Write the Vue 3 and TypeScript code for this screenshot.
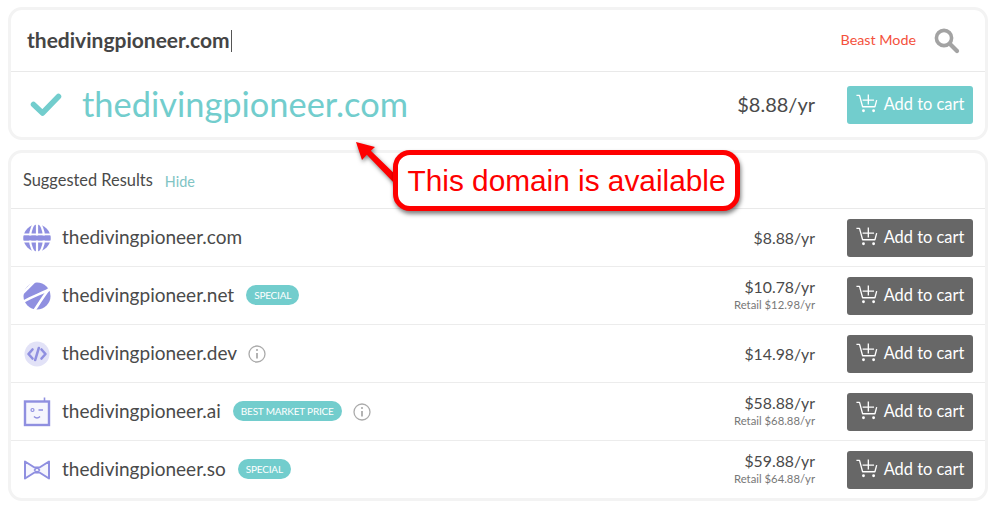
<script setup lang="ts">
interface Row {
  name: string
  price: string
  retail?: string
  badge?: string
  info?: boolean
  icon: 'com' | 'net' | 'dev' | 'ai' | 'so'
}

const rows: Row[] = [
  { name: 'thedivingpioneer.com', price: '$8.88/yr', icon: 'com' },
  { name: 'thedivingpioneer.net', price: '$10.78/yr', retail: 'Retail $12.98/yr', badge: 'SPECIAL', icon: 'net' },
  { name: 'thedivingpioneer.dev', price: '$14.98/yr', info: true, icon: 'dev' },
  { name: 'thedivingpioneer.ai', price: '$58.88/yr', retail: 'Retail $68.88/yr', badge: 'BEST MARKET PRICE', info: true, icon: 'ai' },
  { name: 'thedivingpioneer.so', price: '$59.88/yr', retail: 'Retail $64.88/yr', badge: 'SPECIAL', icon: 'so' },
]
</script>

<template>
  <div class="page">
    <section class="card">
      <div class="search">
        <span class="query">thedivingpioneer.com</span><span class="caret"></span>
        <a class="beast">Beast Mode</a>
        <svg class="glass" width="26" height="26" viewBox="0 0 26 26" fill="none" stroke="#a3a3a3">
          <circle cx="10" cy="10" r="7.6" stroke-width="3.6" />
          <path d="M16 16 L23 23" stroke-width="4.2" stroke-linecap="round" />
        </svg>
      </div>
      <div class="hit">
        <svg class="check" width="32" height="24" viewBox="0 0 32 24" fill="none" stroke="#72cdcd" stroke-width="5.5" stroke-linecap="round" stroke-linejoin="round">
          <path d="M3.5 11.5 L12.5 20 L28.5 3.5" />
        </svg>
        <span class="hit-name">thedivingpioneer.com</span>
        <span class="hit-price">$8.88/yr</span>
        <button class="cart teal">
          <svg width="22" height="19.4" viewBox="0 0 25 22" fill="none" stroke="#fff" stroke-width="1.5">
            <path d="M0.5 1.5 H4 L7.5 14.5 H21.5 L23.5 7" stroke-linejoin="round" />
            <path d="M7.5 7 H20.5 M14 0.5 V12" />
            <circle cx="8.5" cy="19" r="1.6" fill="#fff" stroke="none" />
            <circle cx="20" cy="19" r="1.6" fill="#fff" stroke="none" />
          </svg>
          Add to cart
        </button>
      </div>
    </section>

    <section class="card second">
      <div class="head">
        <span class="head-title">Suggested Results</span>
        <a class="hide">Hide</a>
      </div>
      <div v-for="row in rows" :key="row.name" class="row">
        <span class="tld">
          <svg v-if="row.icon === 'com'" width="28" height="28" viewBox="0 0 28 28">
            <circle cx="14" cy="14" r="13.5" fill="#8f8fe0" />
            <g fill="none" stroke="#fff" stroke-width="2.2">
              <ellipse cx="14" cy="14" rx="7" ry="15" />
              <path d="M14 0 V28 M0 10.5 H28 M0 17.5 H28" />
            </g>
            <rect x="0.5" y="11.6" width="27" height="4.8" fill="#8f8fe0" />
          </svg>
          <svg v-else-if="row.icon === 'net'" width="28" height="28" viewBox="0 0 28 28">
            <circle cx="14" cy="14" r="13.5" fill="#8f8fe0" />
            <g fill="none" stroke="#fff" stroke-width="2.6">
              <path d="M-1 12 L12 -1" />
              <path d="M0 20 C8 15 20 11 29 6" />
              <path d="M11 29 C15 23 20 15 26 7" />
            </g>
          </svg>
          <svg v-else-if="row.icon === 'dev'" width="28" height="28" viewBox="0 0 28 28">
            <circle cx="14" cy="14" r="12.5" fill="#e2e2f7" />
            <g fill="none" stroke="#8f8fe0" stroke-width="2.6" stroke-linecap="round" stroke-linejoin="round">
              <path d="M9.5 9.5 L5.5 14 L9.5 18.5 M18.5 9.5 L22.5 14 L18.5 18.5 M15.8 8 L12.2 20" />
            </g>
          </svg>
          <svg v-else-if="row.icon === 'ai'" width="28" height="30" viewBox="0 0 28 30">
            <rect x="2" y="4.5" width="24" height="23.5" fill="#f6f6fd" stroke="#8f8fe0" stroke-width="2.4" />
            <path d="M21.5 0.5 V4" stroke="#8f8fe0" stroke-width="1.6" />
            <circle cx="9.5" cy="13" r="1.5" fill="none" stroke="#8f8fe0" stroke-width="1.2" />
            <path d="M15.5 13 H20 M11 19.5 C13 21.5 15 21.5 17 19.5" fill="none" stroke="#8f8fe0" stroke-width="1.5" />
          </svg>
          <svg v-else width="28" height="20" viewBox="0 0 28 20" fill="none" stroke="#8f8fe0" stroke-width="2" stroke-linejoin="round">
            <path d="M2 1.5 L11.5 7.5 H16.5 L26 1.5 V18.5 L16.5 12.5 H11.5 L2 18.5 Z" fill="#f6f6fd" />
            <path d="M14 7.5 L16.5 10 L14 12.5 L11.5 10 Z" fill="#fff" stroke-width="1.6" />
          </svg>
        </span>
        <span class="name">{{ row.name }}</span>
        <span v-if="row.badge" class="badge">{{ row.badge }}</span>
        <svg v-if="row.info" class="info" width="18" height="18" viewBox="0 0 18 18" fill="none" stroke="#ababab" stroke-width="1.3">
          <circle cx="9" cy="9" r="8" />
          <path d="M9 8 V13.5" stroke-width="1.8" />
          <circle cx="9" cy="5" r="1.1" fill="#ababab" stroke="none" />
        </svg>
        <span class="prices" :class="{ stacked: row.retail }">
          <span class="price">{{ row.price }}</span>
          <span v-if="row.retail" class="retail">{{ row.retail }}</span>
        </span>
        <button class="cart">
          <svg width="22" height="19.4" viewBox="0 0 25 22" fill="none" stroke="#fff" stroke-width="1.5">
            <path d="M0.5 1.5 H4 L7.5 14.5 H21.5 L23.5 7" stroke-linejoin="round" />
            <path d="M7.5 7 H20.5 M14 0.5 V12" />
            <circle cx="8.5" cy="19" r="1.6" fill="#fff" stroke="none" />
            <circle cx="20" cy="19" r="1.6" fill="#fff" stroke="none" />
          </svg>
          Add to cart
        </button>
      </div>
    </section>

    <svg class="arrow" width="50" height="50" viewBox="0 0 50 50">
      <path d="M1 3 L20 8 L15.8 11.8 L46 41 L41 46 L11.8 15.8 L7 21 Z" fill="#fe0000" />
    </svg>
    <div class="callout">This domain is available</div>
  </div>
</template>

<style>
html,
body {
  background: #fff;
}
</style>

<style scoped>
.page {
  position: relative;
  width: 1000px;
  height: 510px;
  box-sizing: border-box;
  padding: 7px 12px 0 8px;
  font-family: Lato, "Open Sans", sans-serif;
  color: #4a4a4a;
  overflow: hidden;
}

.card {
  border: 3px solid #f3f3f3;
  border-radius: 14px;
  background: #fff;
}

.second {
  margin-top: 10px;
}

.search {
  height: 62px;
  display: flex;
  align-items: center;
  padding: 0 25px 0 16px;
  border-bottom: 1px solid #e9e9e9;
  box-sizing: border-box;
}

.query {
  margin-bottom: 2px;
  font-size: 21px;
  font-weight: 700;
  color: #454545;
}

.caret {
  width: 1px;
  height: 22px;
  margin-left: 1px;
  background: #555;
}

.beast {
  margin-left: auto;
  margin-bottom: 2px;
  font-size: 14.3px;
  color: #f4513c;
}

.glass {
  margin-left: 18px;
}

.hit {
  height: 65px;
  display: flex;
  align-items: center;
  padding: 0 12px 0 19px;
}

.check {
  flex: none;
}

.hit-name {
  margin-left: 20px;
  margin-bottom: 3px;
  font-size: 34.4px;
  color: #72cdcd;
}

.hit-price {
  margin-left: auto;
  margin-right: 32px;
  margin-bottom: 2px;
  font-size: 20px;
}

.cart {
  width: 126px;
  height: 38px;
  display: flex;
  align-items: center;
  justify-content: center;
  gap: 6px;
  border: 0;
  border-radius: 3px;
  padding: 0 0 2px;
  background: #676767;
  color: #fff;
  font-family: inherit;
  font-size: 16.4px;
}

.teal {
  background: #72cdcd;
}

.head {
  height: 56px;
  display: flex;
  align-items: center;
  padding-left: 12px;
  border-bottom: 1px solid #e9e9e9;
  box-sizing: border-box;
}

.head-title {
  margin-bottom: 2px;
  font-size: 16.4px;
}

.hide {
  margin-left: 12px;
  margin-top: 2px;
  font-size: 14.4px;
  color: #7fc4c4;
}

.row {
  height: 58px;
  display: flex;
  align-items: center;
  padding: 0 12px;
  border-bottom: 1px solid #ececec;
  box-sizing: border-box;
}

.row:last-child {
  height: 57px;
  border-bottom: 0;
}

.tld {
  width: 28px;
  display: flex;
  justify-content: center;
  flex: none;
}

.name {
  margin-left: 11px;
  margin-bottom: 2px;
  font-size: 19px;
}

.badge {
  margin-left: 12px;
  margin-bottom: 2px;
  height: 20px;
  line-height: 20px;
  padding: 0 8px;
  border-radius: 10px;
  background: #72cdcd;
  color: #fff;
  font-size: 10px;
  letter-spacing: -0.2px;
}

.info {
  margin-left: 11px;
}

.prices {
  margin-left: auto;
  margin-right: 32px;
  display: flex;
  flex-direction: column;
  align-items: flex-end;
}

.stacked {
  margin-bottom: 4px;
  gap: 2px;
}

.price {
  font-size: 15.8px;
}

.retail {
  font-size: 11.3px;
  color: #777;
}

.arrow {
  position: absolute;
  left: 355px;
  top: 139px;
  filter: drop-shadow(1px 2px 2px rgba(0, 0, 0, 0.5));
}

.callout {
  position: absolute;
  left: 393px;
  top: 150px;
  width: 347px;
  height: 61px;
  box-sizing: border-box;
  display: flex;
  align-items: center;
  justify-content: center;
  border: 5px solid #fe0000;
  border-radius: 17px;
  background: #fff;
  box-shadow: 1px 3px 4px rgba(0, 0, 0, 0.5);
  font-family: "Liberation Sans", Arial, sans-serif;
  font-size: 29.8px;
  white-space: nowrap;
  color: #fe0000;
}
</style>
